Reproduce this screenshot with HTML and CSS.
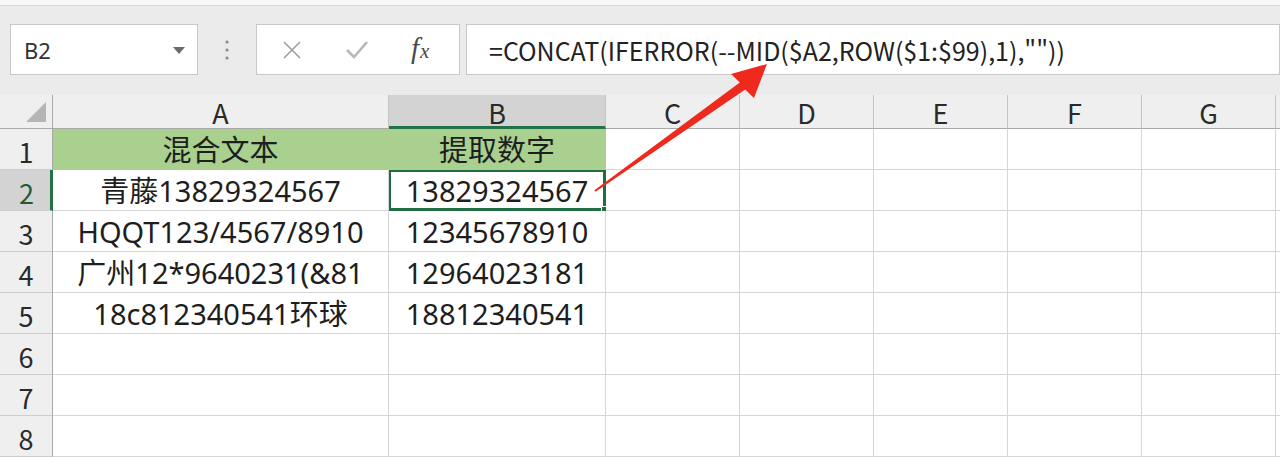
FILE: index.html
```html
<!DOCTYPE html>
<html lang="zh">
<head>
<meta charset="utf-8">
<title>Excel</title>
<link rel="stylesheet" href="styles.css">
</head>
<body>
<div class="page">
  <div class="topstrip"></div>
  <div class="toolbar">
    <div class="namebox">
      <span class="ref">B2</span>
      <svg class="drop" width="12" height="7" viewBox="0 0 12 7"><polygon points="0,0 12,0 6,7" fill="#6b6b6b"/></svg>
    </div>
    <div class="dots">
      <svg width="6" height="22" viewBox="0 0 6 22"><circle cx="3" cy="3" r="1.6" fill="#8a8a8a"/><circle cx="3" cy="11" r="1.6" fill="#8a8a8a"/><circle cx="3" cy="19" r="1.6" fill="#8a8a8a"/></svg>
    </div>
    <div class="btnbox">
      <svg class="btn" width="22" height="22" viewBox="0 0 22 22"><path d="M3 3 L19 19 M19 3 L3 19" stroke="#9e9e9e" stroke-width="1.6" fill="none"/></svg>
      <svg class="btn" width="24" height="20" viewBox="0 0 24 20"><path d="M2 10 L9 17 L22 2" stroke="#b8b8b8" stroke-width="2.6" fill="none"/></svg>
      <span class="fx"><span class="f">f</span><span class="x">x</span></span>
    </div>
    <div class="formula">=CONCAT(IFERROR(--MID($A2,ROW($1:$99),1),""))</div>
  </div>
  <div class="grid">
    <div class="corner"><svg width="20" height="20" viewBox="0 0 20 20"><polygon points="0,20 20,20 20,0" fill="#b5b5b5"/></svg></div>
    <div class="ch">A</div>
    <div class="ch sel">B</div>
    <div class="ch">C</div>
    <div class="ch">D</div>
    <div class="ch">E</div>
    <div class="ch">F</div>
    <div class="ch">G</div>
    <div class="ch"></div>

    <div class="rh">1</div>
    <div class="c green">混合文本</div>
    <div class="c green">提取数字</div>
    <div class="c"></div><div class="c"></div><div class="c"></div><div class="c"></div><div class="c"></div><div class="c"></div>

    <div class="rh sel">2</div>
    <div class="c">青藤13829324567</div>
    <div class="c active">13829324567<span class="handle"></span></div>
    <div class="c"></div><div class="c"></div><div class="c"></div><div class="c"></div><div class="c"></div><div class="c"></div>

    <div class="rh">3</div>
    <div class="c">HQQT123/4567/8910</div>
    <div class="c">12345678910</div>
    <div class="c"></div><div class="c"></div><div class="c"></div><div class="c"></div><div class="c"></div><div class="c"></div>

    <div class="rh">4</div>
    <div class="c">广州12*9640231(&amp;81</div>
    <div class="c">12964023181</div>
    <div class="c"></div><div class="c"></div><div class="c"></div><div class="c"></div><div class="c"></div><div class="c"></div>

    <div class="rh">5</div>
    <div class="c">18c812340541环球</div>
    <div class="c">18812340541</div>
    <div class="c"></div><div class="c"></div><div class="c"></div><div class="c"></div><div class="c"></div><div class="c"></div>

    <div class="rh">6</div>
    <div class="c"></div><div class="c"></div><div class="c"></div><div class="c"></div><div class="c"></div><div class="c"></div><div class="c"></div><div class="c"></div>

    <div class="rh">7</div>
    <div class="c"></div><div class="c"></div><div class="c"></div><div class="c"></div><div class="c"></div><div class="c"></div><div class="c"></div><div class="c"></div>

    <div class="rh">8</div>
    <div class="c"></div><div class="c"></div><div class="c"></div><div class="c"></div><div class="c"></div><div class="c"></div><div class="c"></div><div class="c"></div>
  </div>
  <svg class="arrow" width="1280" height="457" viewBox="0 0 1280 457">
    <polygon points="594.4,190.2 739.8,82.4 731,74 767,64 754,98 745.2,89.6 595.6,191.8" fill="#ee2a1d"/>
  </svg>
</div>
</body>
</html>
```

FILE: styles.css
```css
* { box-sizing: border-box; }
html, body { margin: 0; padding: 0; }
body {
  width: 1280px;
  height: 457px;
  overflow: hidden;
  background: #ebebeb;
  font-family: "Noto Sans CJK SC", "Noto Sans", sans-serif;
  color: #222;
}
.page { position: relative; width: 1280px; height: 457px; overflow: hidden; }

.topstrip {
  height: 6px;
  background: #f7f7f7;
  border-bottom: 1px solid #d9d9d9;
}

.toolbar {
  display: flex;
  align-items: stretch;
  height: 89px;
  padding: 18px 0 0 10px;
}
.namebox, .btnbox, .formula {
  height: 51px;
  background: #fff;
  border: 1px solid #c8c8c8;
}
.namebox {
  width: 188px;
  display: flex;
  align-items: center;
  justify-content: space-between;
  padding: 0 12px 0 13px;
}
.ref { font-size: 22px; color: #333; font-family: "Noto Sans", sans-serif; }
.drop { margin-top: 1px; }
.dots {
  width: 58px;
  height: 51px;
  display: flex;
  align-items: center;
  justify-content: center;
}
.btnbox {
  width: 204px;
  display: flex;
  align-items: center;
  padding: 0 0 0 24px;
}
.btnbox .btn:nth-child(1) { margin-right: 42px; }
.btnbox .btn:nth-child(2) { margin-right: 42px; }
.fx {
  font-family: "Liberation Serif", serif;
  font-style: italic;
  color: #4a4a4a;
  display: flex;
  align-items: baseline;
  margin-top: -2px;
}
.fx .f { font-size: 29px; }
.fx .x { font-size: 21px; margin-left: 1px; }
.formula {
  flex: 1;
  margin-left: 6px;
  display: flex;
  align-items: center;
  padding-left: 22px;
  font-size: 25px;
  color: #222;
  white-space: nowrap;
}

.grid {
  display: grid;
  grid-template-columns: 53px 336px 217px 134px 134px 134px 134px 134px 134px;
  grid-template-rows: 34px repeat(8, 41px);
}
.corner, .ch, .rh {
  background: #efefef;
  color: #2a2a2a;
}
.corner {
  border-right: 1px solid #a9a9a9;
  border-bottom: 1px solid #a9a9a9;
  display: flex;
  align-items: flex-end;
  justify-content: flex-end;
  padding: 0 6px 6px 0;
}
.ch {
  border-right: 1px solid #c4c4c4;
  border-bottom: 1px solid #a9a9a9;
  display: flex;
  align-items: center;
  justify-content: center;
  font-size: 27px;
  line-height: 1;
  padding-top: 2px;
}
.ch.sel {
  background: #d3d3d3;
  border-bottom: 3px solid #217346;
  padding-top: 4px;
}
.rh {
  border-right: 1px solid #a9a9a9;
  border-bottom: 1px solid #cdcdcd;
  display: flex;
  align-items: flex-end;
  justify-content: center;
  font-size: 27px;
  line-height: 1;
  padding-bottom: 4px;
}
.rh.sel {
  background: #d3d3d3;
  border-right: 3px solid #217346;
  color: #1f5a3a;
  padding-left: 3px;
}
.c {
  position: relative;
  background: #fff;
  border-right: 1px solid #d6d6d6;
  border-bottom: 1px solid #d6d6d6;
  display: flex;
  align-items: flex-end;
  justify-content: center;
  font-family: "Noto Sans", "Noto Sans CJK SC", sans-serif;
  font-size: 29px;
  line-height: 1;
  padding-bottom: 5px;
  white-space: nowrap;
  color: #1e1e1e;
}
.c.green {
  background: #a9d08e;
  border-color: #a9d08e;
}
.c.active {
  box-shadow: inset 0 0 0 2px #1f6e43;
  border-color: #1f6e43;
}
.handle {
  position: absolute;
  right: -5px;
  bottom: -5px;
  width: 9px;
  height: 9px;
  background: #1f6e43;
  border: 1px solid #fff;
}
.arrow {
  position: absolute;
  left: 0;
  top: 0;
  pointer-events: none;
}
```
